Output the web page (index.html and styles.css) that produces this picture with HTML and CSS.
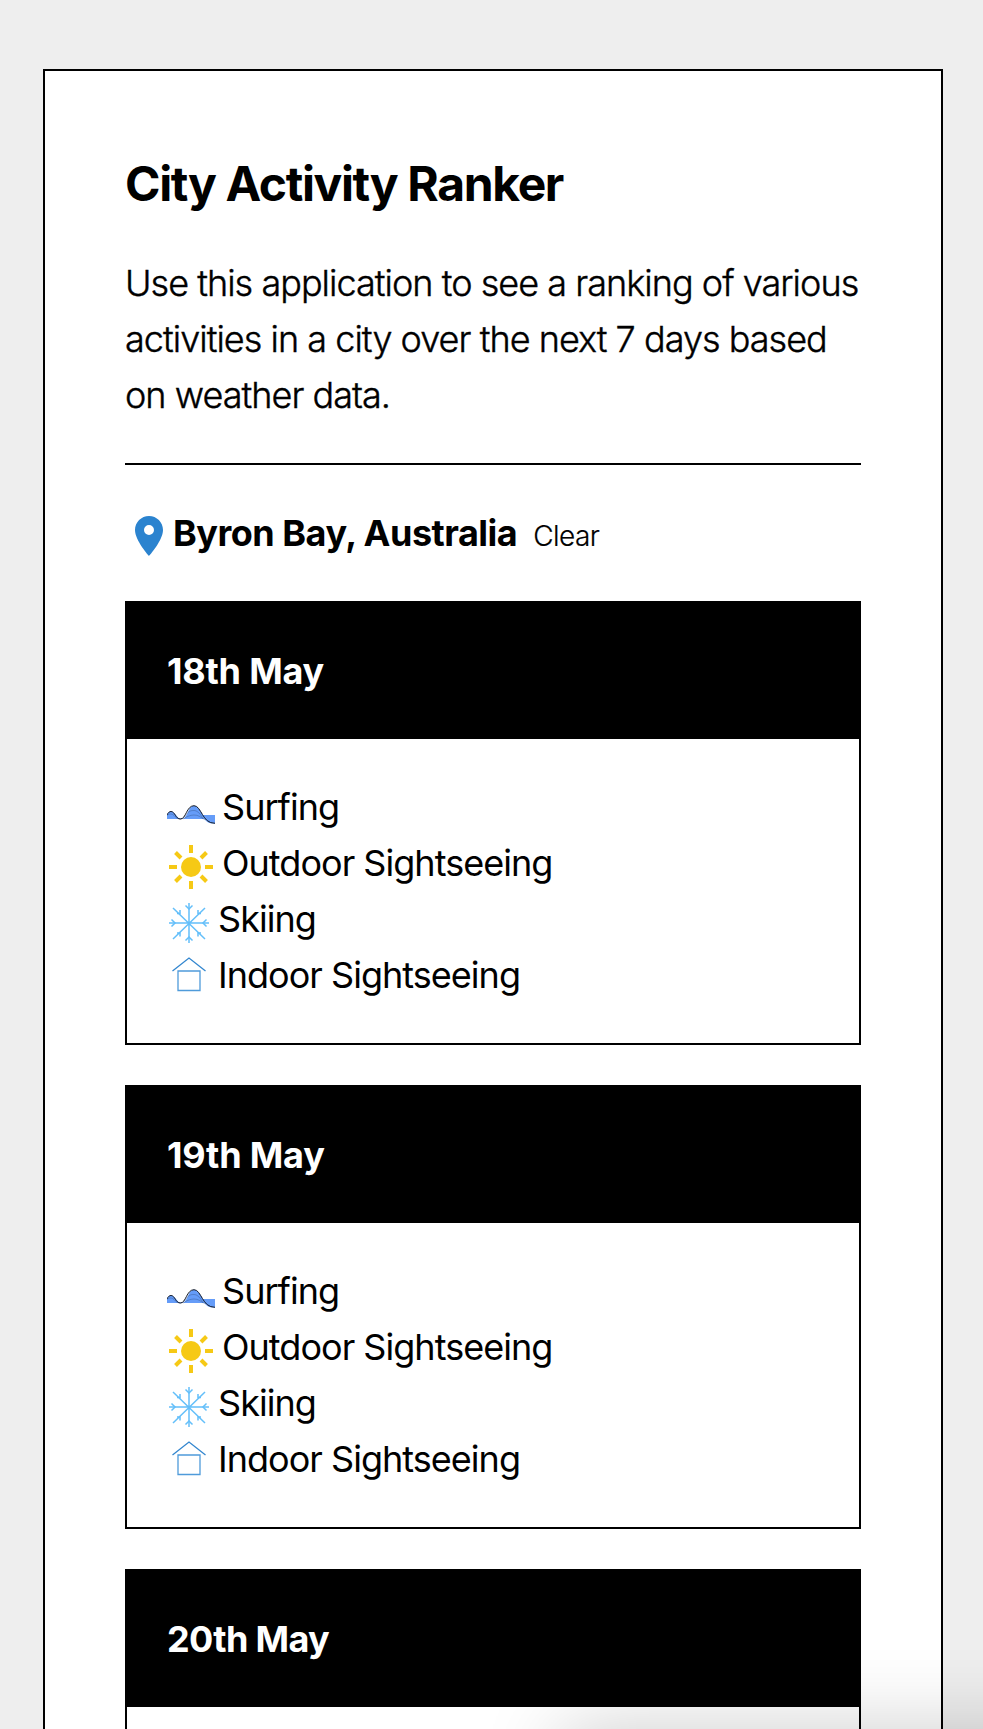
FILE: index.html
```html
<!DOCTYPE html>
<html lang="en">
<head>
<meta charset="utf-8">
<title>City Activity Ranker</title>
<link rel="stylesheet" href="styles.css">
</head>
<body>
<svg class="sprite" aria-hidden="true">
  <symbol id="wave" viewBox="0 0 48 24">
    <path fill="#659cf8" d="M0 11C1 8.500 2.500 7.500 4 7.500 6.500 7.500 7.500 9.500 9 11l3 3.500h5L19.500 11C22 6 23 1.700 27 1.700S33.500 6.500 36 11h12v8.500c-5 .5-8-1-10.500-4.500H0z"/>
    <g fill="none" stroke="#26416f" stroke-width=".5" stroke-opacity=".65">
      <path d="M0 11.500C2 9.500 5 9.500 7 11.500S10 15 13 15s5-3 7-5.500S24 6.500 27 6.500s6 3 8 6.500 2.500 2 4 3"/>
      <path d="M16 15c3-2 7-4 11-4s7 2 9 4"/>
    </g>
    <path d="M0 11C1 8.500 2.500 7.500 4 7.500 8 7.500 8.500 15 13.500 15 19 15 19.500 1.700 27 1.700S35 19.500 48 19.300" fill="none" stroke="#161c28" stroke-width="1"/>
  </symbol>
  <symbol id="sun" viewBox="0 0 48 48">
    <circle cx="24" cy="24" r="10" fill="#f6c915"/>
    <path d="M24 2v8M24 38v8M2 24h8M38 24h8M8.500 9.500l5.500 5.500M34 33l5.500 5.500M39.500 9.500L34 15M14 33l-5.500 5.500" stroke="#f6c915" stroke-width="4"/>
  </symbol>
  <symbol id="snow" viewBox="0 0 44 44">
    <g fill="none" stroke="#63bffa" stroke-width="1.500">
      <path d="M22 2v40M2 22h40M6 7l32 31M38 7L6 38"/>
      <path d="M18.500 4.500L22 8l3.500-3.500M18.500 39.500L22 36l3.500 3.500M4.500 18.500L8 22l-3.500 3.500M39.500 18.500L36 22l3.500 3.500M10 12.500h3V9M34 12.500h-3V9M10 32h3v3.500M34 32h-3v3.500"/>
    </g>
  </symbol>
  <symbol id="home" viewBox="0 0 44 44">
    <g fill="none" stroke="#3286cf" stroke-width="1.300">
      <path d="M5.500 14L22 1 38.500 14"/>
      <path d="M11 14h22v19.500H11z" stroke="#4f9bda"/>
    </g>
  </symbol>
</svg>
<main class="panel">
  <h1 class="title">City Activity Ranker</h1>
  <p class="intro">Use this application to see a ranking of various<br>activities in a city over the next 7 days based<br>on weather data.</p>
  <div class="location">
    <svg class="pin" viewBox="0 0 24 24"><path fill="#2b83cf" d="M12 2C8.130 2 5 5.130 5 9c0 5.250 7 13 7 13s7-7.750 7-13c0-3.870-3.130-7-7-7zm0 9.500a2.500 2.500 0 010-5 2.500 2.500 0 010 5z"/></svg>
    <h2 class="city">Byron Bay, Australia</h2>
    <span class="clear">Clear</span>
  </div>
  <div class="days">
    <section class="day">
      <h3 class="date">18th May</h3>
      <ul class="list">
        <li class="item"><svg class="icon wave"><use href="#wave"/></svg><span>Surfing</span></li>
        <li class="item"><svg class="icon sun"><use href="#sun"/></svg><span>Outdoor Sightseeing</span></li>
        <li class="item"><svg class="icon small"><use href="#snow"/></svg><span>Skiing</span></li>
        <li class="item"><svg class="icon small"><use href="#home"/></svg><span>Indoor Sightseeing</span></li>
      </ul>
    </section>
    <section class="day">
      <h3 class="date">19th May</h3>
      <ul class="list">
        <li class="item"><svg class="icon wave"><use href="#wave"/></svg><span>Surfing</span></li>
        <li class="item"><svg class="icon sun"><use href="#sun"/></svg><span>Outdoor Sightseeing</span></li>
        <li class="item"><svg class="icon small"><use href="#snow"/></svg><span>Skiing</span></li>
        <li class="item"><svg class="icon small"><use href="#home"/></svg><span>Indoor Sightseeing</span></li>
      </ul>
    </section>
    <section class="day">
      <h3 class="date last">20th May</h3>
      <ul class="list"></ul>
    </section>
  </div>
</main>
<div class="shade"></div>
</body>
</html>
```
FILE: styles.css
```css
* { box-sizing: border-box; }
html { overflow: hidden; }
body {
  margin: 0;
  height: 1729px;
  overflow: hidden;
  padding: 69px 40px 0 43px;
  background: #eee;
  color: #000;
  font: 400 36px/56px Inter, sans-serif;
}
h1, h2, h3, p, ul { margin: 0; padding: 0; }
.sprite { display: none; }
.panel {
  height: 1660px;
  overflow: hidden;
  padding: 80px 80px 0;
  background: #fff;
  border: 2px solid #000;
  border-bottom: 0;
}
.title {
  font-size: 48px;
  line-height: 66px;
  font-weight: 700;
  letter-spacing: -1.38px;
}
.intro {
  margin-top: 38px;
  padding-bottom: 40px;
  height: 210px;
  border-bottom: 2px solid #000;
  font-weight: 300;
  letter-spacing: -0.97px;
  -webkit-text-stroke: 0.4px #000;
  white-space: nowrap;
}
.location {
  display: flex;
  align-items: baseline;
  height: 136px;
  padding-top: 40px;
}
.pin {
  width: 48px;
  height: 48px;
  align-self: flex-start;
  margin-top: 7px;
}
.city {
  font-size: 36px;
  font-weight: 700;
  letter-spacing: -0.5px;
}
.clear {
  margin-left: 16px;
  font-size: 28px;
  font-weight: 300;
  letter-spacing: -0.55px;
  -webkit-text-stroke: 0.2px #000;
}
.days { display: grid; gap: 40px; }
.day { border: 2px solid #000; border-top: 0; }
.date {
  height: 138px;
  padding: 42px 40px 40px;
  background: #000;
  color: #fff;
  font-size: 36px;
  font-weight: 700;
  letter-spacing: -0.2px;
}
.last { letter-spacing: -0.65px; }
.list { height: 304px; padding: 40px; list-style: none; }
.item {
  display: flex;
  gap: 7px;
  height: 56px;
  letter-spacing: -0.97px;
}
.icon { flex: none; }
.wave { width: 48px; height: 24px; margin-top: 25px; }
.sun { width: 48px; height: 48px; margin-top: 8px; }
.small { width: 44px; height: 44px; margin-top: 10px; }
.shade {
  position: fixed;
  left: 562px;
  top: 1729px;
  width: 700px;
  height: 300px;
  box-shadow: 0 0 76px rgba(0, 0, 0, 0.2);
  pointer-events: none;
}
```
